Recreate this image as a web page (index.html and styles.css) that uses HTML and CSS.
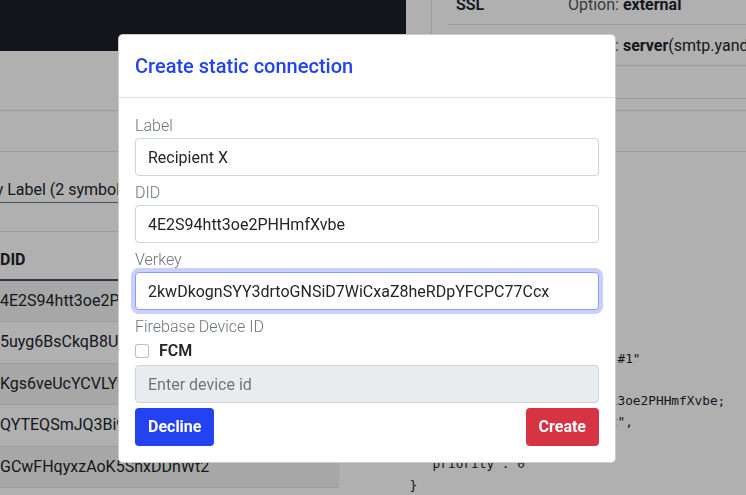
FILE: index.html
```html
<!DOCTYPE html>
<html lang="en">
<head>
<meta charset="utf-8">
<title>Create static connection</title>
<link rel="stylesheet" href="styles.css">
</head>
<body>
<div class="page">
  <div class="top-row">
    <div class="dark-block"></div>
    <div class="info-card">
      <table class="info-table">
        <tr><th>SSL</th><td><span class="opt">Option:</span> <b>external</b></td></tr>
        <tr><th>SMTP</th><td><span class="opt">Option:</span> <b>server</b>(smtp.yandex.ru:465)</td></tr>
      </table>
    </div>
  </div>
  <div class="tabs-band"></div>
  <div class="main-row">
    <div class="left-col">
      <div class="filter">Filter by Label (2 symbols min)</div>
      <table class="conn-table">
        <thead><tr><th>DID</th></tr></thead>
        <tbody>
          <tr><td>4E2S94htt3oe2PHHmfXvbe</td></tr>
          <tr><td>5uyg6BsCkqB8UjV3pPvQZr</td></tr>
          <tr><td>Kgs6veUcYCVLYyR2kQ8mHt</td></tr>
          <tr><td>QYTEQSmJQ3Bi9aF7nWxLpc</td></tr>
          <tr><td>GCwFHqyxzAoK5SnxDDnWt2</td></tr>
        </tbody>
      </table>
    </div>
    <pre class="json">{
  "@type": "connection",
  "static": true,
  "their": {
    "role": "peer",
    "fcm": false,
    "keys": [],
    "state": "active",
    "seq": 1,
    "label": "Test Recipient #1"
    "verkey": [],
    "did": "did:sov:4E2S94htt3oe2PHHmfXvbe;
    "endpoint": "http://agent",
    "routing": [],
    "priority": 0
  }
}</pre>
  </div>
</div>

<div class="backdrop"></div>

<div class="modal">
  <div class="modal-header">
    <h5 class="modal-title">Create static connection</h5>
  </div>
  <div class="modal-body">
    <div class="group">
      <label class="lbl">Label</label>
      <input class="field" type="text" value="Recipient X">
    </div>
    <div class="group">
      <label class="lbl">DID</label>
      <input class="field" type="text" value="4E2S94htt3oe2PHHmfXvbe">
    </div>
    <div class="group">
      <label class="lbl">Verkey</label>
      <input class="field focused" type="text" value="2kwDkognSYY3drtoGNSiD7WiCxaZ8heRDpYFCPC77Ccx">
    </div>
    <div class="group">
      <label class="lbl">Firebase Device ID</label>
      <div class="check-row">
        <input class="check" type="checkbox">
        <span class="check-label">FCM</span>
      </div>
      <input class="field" type="text" placeholder="Enter device id" disabled>
    </div>
    <div class="actions">
      <button class="btn btn-blue">Decline</button>
      <button class="btn btn-red">Create</button>
    </div>
  </div>
</div>
</body>
</html>
```

FILE: styles.css
```css
* { box-sizing: border-box; }

html, body {
  margin: 0;
  padding: 0;
  background: #ffffff;
  overflow: hidden;
}

body {
  font-family: "Segoe UI", Roboto, "Open Sans", sans-serif;
  font-size: 16px;
  line-height: 24px;
  color: #212529;
  width: 746px;
  height: 495px;
}

.page {
  margin-top: -16px;
}

/* top row */
.top-row {
  display: grid;
  grid-template-columns: 406px 1fr;
  column-gap: 25px;
  align-items: start;
}

.dark-block {
  height: 67px;
  background: #1b1f25;
}

.info-card {
  border-left: 1px solid #dee2e6;
  border-bottom: 1px solid #dee2e6;
  padding: 0 0 32px 16px;
  overflow: hidden;
}

.info-table {
  border-collapse: collapse;
  table-layout: fixed;
  width: 100%;
  white-space: nowrap;
}

.info-table th,
.info-table td {
  padding: 9px 8px 7px;
  border-bottom: 1px solid #dee2e6;
  text-align: left;
  overflow: visible;
}

.info-table th {
  width: 112px;
  font-weight: 600;
}

.info-table .opt {
  color: #555;
}

.info-table b {
  font-weight: 700;
}

.tabs-band {
  margin-top: 11px;
  height: 42px;
  border-top: 1px solid #dee2e6;
  border-bottom: 1px solid #dee2e6;
}

/* main row */
.main-row {
  display: grid;
  grid-template-columns: 339px 1fr;
  column-gap: 55px;
  align-items: start;
}

.left-col {
  overflow: hidden;
}

.filter {
  margin-top: 26px;
  line-height: 24px;
  border-bottom: 1px solid #6c757d;
  white-space: nowrap;
  text-indent: -53px;
}

.conn-table {
  margin-top: 28px;
  margin-left: -12px;
  width: calc(100% + 12px);
  border-collapse: collapse;
  border-top: 1px solid #dee2e6;
}

.conn-table th {
  text-align: left;
  font-weight: 700;
  padding: 16px 12px 7px;
  border-bottom: 2px solid #495057;
}

.conn-table td {
  padding: 8px 12px;
  line-height: 24.4px;
  border-bottom: 1px solid #dee2e6;
  white-space: nowrap;
}

.conn-table tbody tr:nth-child(odd) td {
  background: rgba(0, 0, 0, 0.05);
}

.json {
  margin: 7px 0 0;
  font-family: "DejaVu Sans Mono", "Liberation Mono", monospace;
  font-size: 12.8px;
  line-height: 21px;
  color: #212529;
  white-space: pre;
}

/* backdrop + modal */
.backdrop {
  position: fixed;
  inset: 0;
  background: rgba(0, 0, 0, 0.31);
}

.modal {
  position: fixed;
  top: 34px;
  left: 118px;
  width: 498px;
  background: #ffffff;
  border: 1px solid rgba(0, 0, 0, 0.2);
  border-radius: 5px;
}

.modal-header {
  padding: 16px;
  border-bottom: 1px solid #dee2e6;
}

.modal-title {
  margin: 0;
  font-size: 20px;
  line-height: 30px;
  font-weight: 500;
  color: #2343f0;
}

.modal-body {
  padding: 16px;
}

.group {
  margin-bottom: 5px;
}

.lbl {
  display: block;
  font-weight: 300;
  color: #6c757d;
  line-height: 24px;
}

.field {
  display: block;
  width: 100%;
  height: 38px;
  padding: 6px 12px;
  font: inherit;
  line-height: 24px;
  color: #212529;
  background: #ffffff;
  border: 1px solid #ced4da;
  border-radius: 4px;
  outline: none;
}

.field.focused {
  border-color: #8f9df7;
  box-shadow: 0 0 0 4px rgba(35, 67, 240, 0.25);
}

.field:disabled {
  background: #e9ecef;
}

.field::placeholder {
  color: #6c757d;
  opacity: 1;
}

.check-row {
  display: flex;
  align-items: center;
  gap: 10px;
  height: 24px;
  margin-bottom: 2px;
}

.check {
  appearance: none;
  -webkit-appearance: none;
  margin: 0;
  width: 14px;
  height: 14px;
  border: 1px solid rgba(0, 0, 0, 0.25);
  border-radius: 3px;
  background: #ffffff;
}

.check-label {
  font-weight: 600;
}

.actions {
  display: flex;
  justify-content: space-between;
}

.btn {
  font: inherit;
  font-weight: 700;
  line-height: 24px;
  padding: 6px 12px;
  border: 1px solid transparent;
  border-radius: 4px;
  color: #ffffff;
}

.btn-blue {
  background: #2343f0;
}

.btn-red {
  background: #d63343;
}
```
